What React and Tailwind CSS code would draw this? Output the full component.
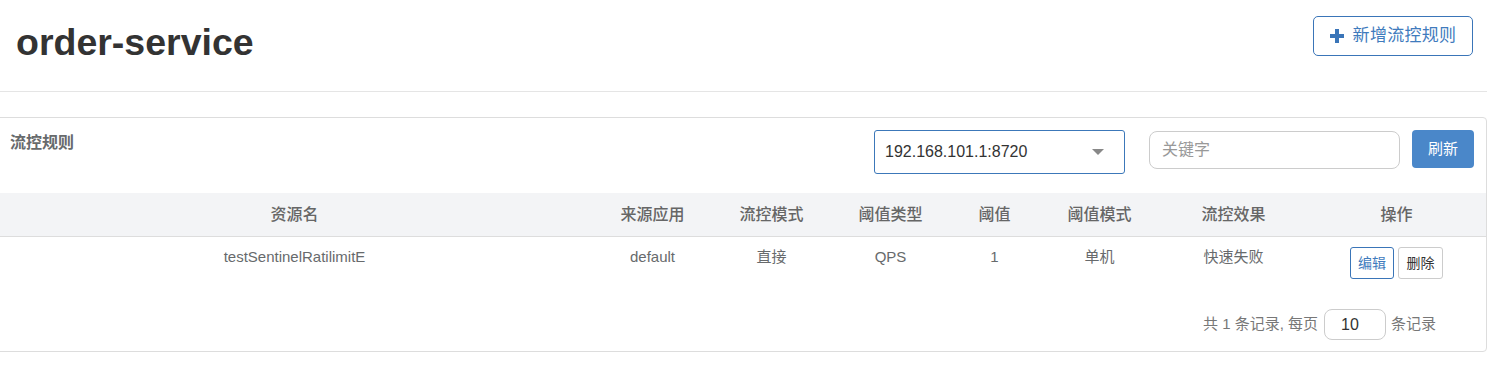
const FONT = "font-['Liberation_Sans','Noto_Sans_CJK_SC',sans-serif]"

const COLS = ['资源名', '来源应用', '流控模式', '阈值类型', '阈值', '阈值模式', '流控效果', '操作']

const ROWS = [
  {
    resource: 'testSentinelRatilimitE',
    limitApp: 'default',
    strategy: '直接',
    grade: 'QPS',
    count: 1,
    clusterMode: '单机',
    behavior: '快速失败',
  },
]

function PlusIcon() {
  return (
    <svg width="14" height="14" viewBox="0 0 14 14" className="shrink-0">
      <path d="M5 0h4v5h5v4H9v5H5V9H0V5h5z" fill="#3a75b8" />
    </svg>
  )
}

export default function App() {
  return (
    <div className={`w-[1506px] h-[381px] overflow-hidden bg-white ${FONT}`}>
      <div className="pr-[19px]">
        <div className="flex items-start justify-between h-[92px] border-b border-[#e5e5e5] pl-4">
          <h1 className="mt-[22px] text-[37.5px] leading-[41px] font-bold text-[#333]">order-service</h1>
          <button className="mt-4 mr-[14px] h-10 w-[160px] flex items-center justify-center gap-[9px] border border-[#3a75b8] rounded-[5px] bg-white text-[#3f7bbd] text-[17px] tracking-[0.3px]">
            <PlusIcon />
            <span>新增流控规则</span>
          </button>
        </div>

        <div className="mt-[25px] -ml-[5px] border border-[#ddd] rounded-[4px]">
          <div className="flex items-start h-[75px] pt-3 pl-[14px] pr-3">
            <div className="mt-[2px] text-[16px] leading-[22px] font-bold text-[#676a6c]">流控规则</div>
            <div className="ml-auto flex items-start">
              <div className="w-[251px] h-[44px] border border-[#3c78b9] rounded-[3px] flex items-center pl-[10px] pr-5">
                <span className="text-[16px] text-[#333]">192.168.101.1:8720</span>
                <span className="ml-auto w-0 h-0 border-l-[6px] border-r-[6px] border-t-[6px] border-l-transparent border-r-transparent border-t-[#888]" />
              </div>
              <div className="ml-[24px] mt-px w-[251px] h-[38px] border border-[#ccc] rounded-[8px] flex items-center pl-3">
                <span className="text-[16px] text-[#999]">关键字</span>
              </div>
              <button className="ml-3 w-[62px] h-[38px] rounded-[4px] bg-[#4a87c9] text-white text-[15px]">刷新</button>
            </div>
          </div>

          <div className="grid grid-cols-[597px_119px_119px_119px_89px_121px_147px_1fr] h-[44px] bg-[#f3f4f6] border-b border-[#ddd] items-center text-center text-[16px] font-medium text-[#666]">
            {COLS.map((c) => (
              <div key={c}>{c}</div>
            ))}
          </div>

          {ROWS.map((r) => (
            <div
              key={r.resource}
              className="grid grid-cols-[597px_119px_119px_119px_89px_121px_147px_1fr] h-[62px] pt-[10px] text-center text-[15px] leading-5 text-[#676a6c]"
            >
              <div>{r.resource}</div>
              <div>{r.limitApp}</div>
              <div>{r.strategy}</div>
              <div>{r.grade}</div>
              <div>{r.count}</div>
              <div>{r.clusterMode}</div>
              <div>{r.behavior}</div>
              <div className="flex justify-center gap-1">
                <button className="w-[44px] h-[32px] border border-[#3a75b8] rounded-[3px] bg-white text-[#3f7bbd] text-[14px]">编辑</button>
                <button className="w-[45px] h-[32px] border border-[#ccc] rounded-[3px] bg-white text-[#333] text-[14px]">删除</button>
              </div>
            </div>
          ))}

          <div className="flex items-center justify-end pt-[10px] pb-[11px] pr-[50px] text-[15px] text-[#777]">
            <span>共 1 条记录, 每页</span>
            <div className="ml-[6px] w-[62px] h-[31px] border border-[#ccc] rounded-[8px] flex items-center pl-4 text-[16px] text-[#333]">10</div>
            <span className="ml-[5px]">条记录</span>
          </div>
        </div>
      </div>
    </div>
  )
}
